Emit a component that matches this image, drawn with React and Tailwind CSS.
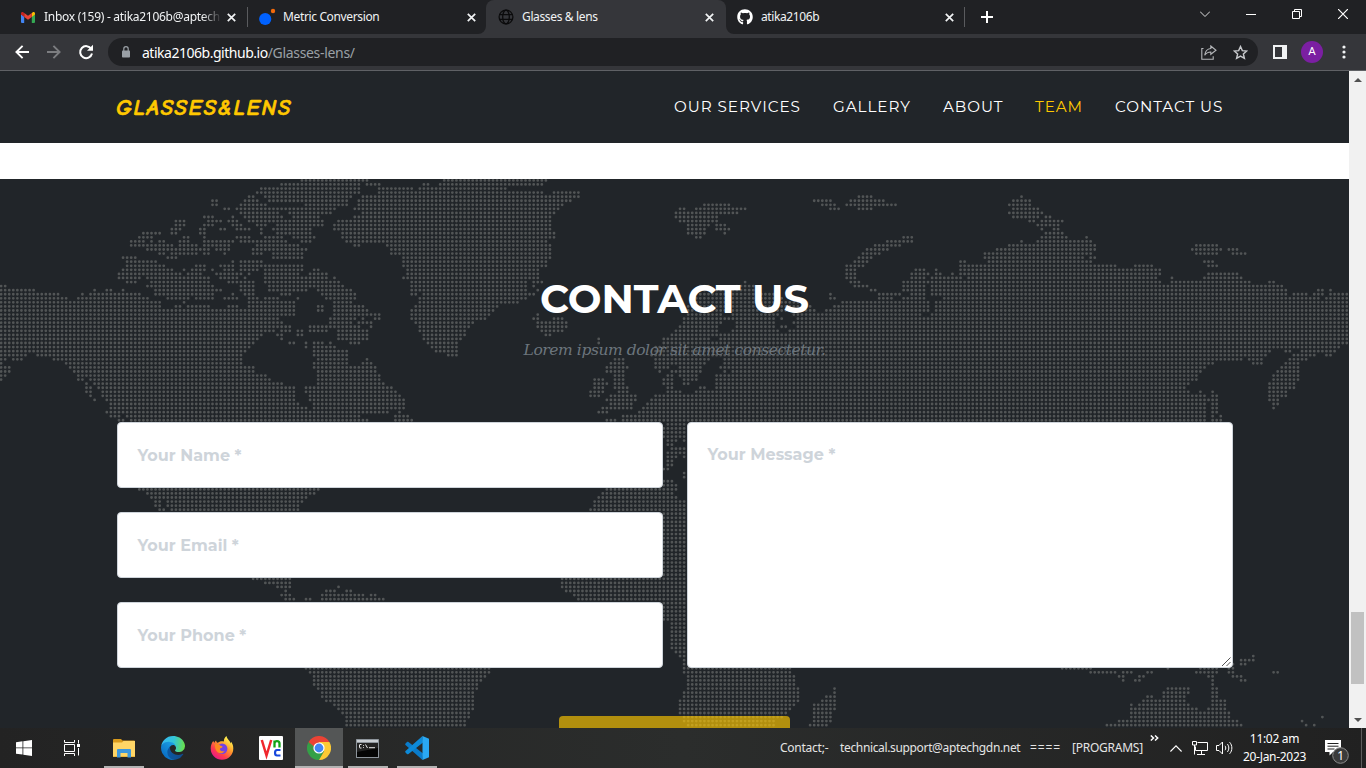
import { FaGithub } from "react-icons/fa";

/* ---------- dotted world map ---------- */

// Each sheet lists rows of land as "y from-to from-to", in thirds of a pixel
// from the sheet origin. An open run ("1210-") reaches the sheet's edge.
const SHEETS = [
  {
    x: 0, y: 170,
    rows: `31 905-1100 1330-|43 845-1078 1100-1140 1270-1285 1318-|55 783-1078 1135-1235 1260-|67 770-1075 1135-|79 745-760 795-1055 1085-|91 636-648 735-770 806-1040 1075-|104 636-648 722-795 915-1045 1075-|116 673-685 710-1010 1065-|128 722-835 865-990 1085-|140 612-636 697 735-845 880-960 1065-|153 527-551 624-660 685-709 745-820 830-965 1015-|165 527-551 612-636 697-720 770-795 830-965 1003-|177 515-540 600-612 660-672 709-745 783 820-930 1003-|189 430-478 515-527 600-612 783 830-930 1027-|201 418-460 551-563 612 709-750 795-850 880-945 1027-|213 393-430 455 478-490 540-563 612-697 722-780 795-860 905-930 1040-|226 393-515 540-590 612-685 770-890 1065-1075 1160-|238 442-500 515-600 612-625 650-685 757-920 1172-|250 478-490 515-590 612-625 673 757-790 820-905 1172-|262 369-405 503-527 820-905 1210-|274 381-465 697 722-785 1210-|286 381-490 588-612 660-697 722-780 795-905 1210-|299 369-515 551 576-612 636 673-697 722-770 795-905 940-955 1222-|311 357-540 564-600 648-720 745 795-865 880-900 930-980 1222-|323 357-420 442-625 660-685 697-709 733 795-980 1003 1210-|335 381-405 455-625 685-709 722-757 795-1018 1235-|347 0-15 442-640 722-760 806-1030 1235-|360 0-100 283 320-332 369 466-660 722-760 806-920 950-1055 1235-|372 0-175 247 271-420 466-640 697 733-760 845-870 965-1060 1235-1247 1270-|384 0-200 235-445 503-565 588-640 673-709 745-770 795-835 890 980-1065 1260-|396 0-480 551 745-785 795-835 845-880 1000-1055 1260-|408 0-480 527-540 564-625 685-709 745-835 845-880 953-965 1000-1090 1247-|421 0-510 520-835 845-880 953-965 1000-1100 1235-|433 0-835 845-880 1000-1060 1075-1110 1125-1137 1235-|445 0-835 990-1070 1085-1095 1125-1137 1235-|457 0-830 845 990-1050 1075-1110 1247-|469 0-830 845-870 930-1080 1110 1260-|481 0-820 845-870 893-905 930-980 1015-1100 1260-|494 0-785 832 845 893-905 1015-1100 1272-|506 0-770 845 1015-1100 1272-|518 0-757 870-880 918 942-965 990 1050-1075 1285-|530 0-745 918 942-1005 1300-|543 0-735 942-1040 1310-|555 0-80 110-725 942-1040 1345-|567 0-15 38-65 160-725 955-1040 1100|579 0-5 197-725 942-1040 1085-1110|591 0-28 210-760 942-1125|604 0-28 220-760 955-1125|616 0-16 235-250 260-795 955-1137|628 0-5 235-245 271-805 955-1137|640 260 285-840 955-1145|652 260-270 297-880 918-1170|665 260-270 310-880 918-1185|677 270 310-880 930-1195|689 283 320-880 935-1210|701 332-890 942-1210|713 332-905 918 942-1210|725 320-905 918-1165 1198|738 332-360 380-1080 1185-1220|750 357-370 393-1100 1185-1235`,
  },
  {
    x: 455, y: 170,
    rows: `31 0-275|43 0-262|55 0-150|67 0-265 295-370|79 0-370 1210-1250|91 0-345 1075-1130 1185-1285|104 0-320 745-820 1100-1140 1175-1325|116 0-310 673-685 722-870 1125-1150 1210-1250|128 0-300 660-850|140 0-290 660-785|153 0-290 673-790|165 0-290 697-760 783-810|177 0-285 697-750 783-820|189 0-295 697-750 808|201 0-295 722-735 1345-|213 0-275 1295-|226 0-285 1260-1340|238 0-285 1235-1300|250 0-285 1222-1275|262 0-285 1210-1250|274 0-275 1198-1235|286 0-275 1175-1220|299 0-250 1175-1205|311 0-250 1175-1205|323 0-250 1175-1200|335 0-215 235-262 870 1185-1210 1345-|347 0-215 240 735-760 845-900 1198-1235 1345-|360 0-215 250 735-910 1250-1260 1345-|372 0-240 735-960 1125 1270-1340|384 0-215 725-980 1125-1137 1270-1310 1345-|396 0-190 710-1040 1160-1260 1270-|408 0-130 700-1065 1137-|421 0-120 700-1080 1115-|433 0-100 245 700-800 830-970 1015-|445 0-50 60-95 235-250 295-320 685-955 985 1025-|457 0-50 250-335 685-800 845-955 1015-|469 0-45 250-335 673-790 845-960 980-995 1025-|481 0-30 262-320 660-780 830-970 1000-|494 0-30 271-285 650-770 790-|506 0-18 430 625-760 800-|518 0-5 430 625-|530 0-5 600-780 790-|543 0-5 600-|555 588-770 790-|567 478-505 600-760 808-|579 466-505 600-750 808-|591 455-515 600-640 673-740 795-|604 455-500 612 648-660 673-735 808-815 830-|616 478-505 636-650 673-730 783-|628 418-445 478-505 625-655 685-725 783-|640 418-455 478-505 625-650 685-700 783-|652 418-445 478-515 636-650 735-750 783-|665 405-445 490-515 636-675 722-|677 405-430 466-540 600-|689 455-540 588-|701 466-525 576-|713 442-530 564-|725 430-455 550-|738 503-|750 455-480 503-|762 636-690|775 625-690|787 625-690|799 625-690|811 636-660 685|823 636-650|835 648-690|848 636-690|860 636-660 685|872 636-650|884 636-650|896 625-640`,
  },
  {
    x: 910, y: 170,
    rows: `79 335|91 310-360|104 298-360|116 310-385|128 298-395|140 310-385 408-420|153 359-371 395-457|165 383-445|177 395 432-445|189 408-457|201 6 395-470 530|213 6 335 383-543|226 298-555 857-920|238 262-555 848-930 955-985|250 225-543 857-920 968-1010|262 225-520 543-555|274 152-165 237-500 515-543 883-910|286 152-620 675-730 895-920|299 18-45 79 152-750|311 0-50 79-90 128 152-750 895-985|323 0-45 67-115 128-155 175-740 785 883-995|335 0-50 67-750 785-1020 1078-1095|347 0-45 67-1120|360 0-45 67-1130 1225-1237 1262|372 0-45 67-1125 1152-1190 1213-1240 1262-|384 0-45 103-1225 1250-|396 0-50 79-105 120-|408 0-55 79-|421 0-55 79-|433 0-30 67-|445 0-|457 0-|469 0-|481 0-|494 0-|506 0-|518 0-|530 0-1290|543 0-1075 1125-1140 1175-1275|555 0-1065 1150-1215 1250-1262|567 0-995 1018-1060 1140-1190|579 0-910 1030-1060 1128-1165|591 0-885 1115-1165|604 0-875 1103-1165|616 0-860 1090-1165|628 0-860 1090-1165|640 0-835 1078-1155|652 0-825 1078-1155|665 0-835 870 908 1078-1130|677 0-885 908-920 1078-1130|689 0-895 908-920 1078-1105|701 0-885 908-920 1090-1105|713 0-885 908-920 1090|725 0-885 908-920|738 0-885 908 932|750 0-885 908-920 932`,
  },
  {
    x: 0, y: 470,
    rows: `58 416-955|70 440-945|82 452-920|94 466-478 503-905|107 466-478 503-895|119 478-490 515-895|327 757-870|339 795-870|351 832-870 1015|363 857 978-1005 1040-1050|375 845-870 966-1005 1015-1090 1112-1125|387 857-880 918-930 966-1150|595 918-|607 930-|619 940-|631 940-|643 940-|656 955-|668 966-|680 966-|692 978-|704 1003-|716 1015-|729 1030-|741 1040-|753 1040-|765 1040-`,
  },
  {
    x: 455, y: 470,
    rows: `9 687|21 687|33 625-650|45 625-660|58 450-650 663|70 440-650|82 430-665|94 418-690|107 418-690|119 405-690|131 625-690|143 625-690|156 625-690|168 625-690|180 625-690|192 625-690|204 625-690|217 625-690|229 625-690|241 625-690|253 625-690|265 625-690|278 625-690|290 625-690|302 625-690|314 625-690|327 320-690|339 320-690|351 320-690|363 332-690|375 357-690|387 369-690|399 625-690|411 625-690|424 625-690|436 625-690|448 625-690|460 650-690|472 650-690|485 650-690|497 650-690|509 650-690|521 650-690|533 650-690|545 660-690|557 673-690|570 687|582 687|595 0-105 687-1005|607 0-105 687-1005|619 0-90 697-1018|631 0-75 697-1018|643 0-65 697-1018|656 0-65 697-1030 1137|668 0-55 685-1030 1137|680 0-55 685-1030 1112-1137|692 0-55 673-1030 1103-1137|704 0-55 673-1018 1078-1137|716 0-55 673-1005 1078-1137|729 0-40 673-990 1078-1125|741 0-40 685-980 1078-1125|753 0-30 685-960 1078-1125|765 0-30 697-960 1066-1115`,
  },
  {
    x: 910, y: 470,
    rows: `558 1030|570 993-1030|582 968 993-1005|595 457-545 773 870-920 955-965|607 543-615 640-665 712-725 860-920 955-965 1090-1103|619 628-640 687-700 895-908 968-995|631 640 675-687 908 993-1005|643 908|656 773-835 908-920|668 760-835 908-920|680 712-725 760-825 908-920|692 700-825 908-945|704 663 687-835 908-945|716 663-860 895-945|729 663-957|741 663-957 1238|753 628-980 1176|765 590-993 1188 1213`,
  },
];

const PITCH = 4.0655;
const MAP_X = 1.1;
const MAP_Y = 1.4;
const TOP = 179;

function mapPath() {
  const dots = new Set();
  for (const sheet of SHEETS) {
    for (const line of sheet.rows.split("|")) {
      const [y, ...runs] = line.split(" ");
      const row = Math.round((sheet.y + Number(y) / 3 - TOP - MAP_Y) / PITCH);
      for (const run of runs) {
        const [a, b] = run.split("-");
        const end = b === undefined ? a : b === "" ? 1365 : b;
        const from = Math.ceil((sheet.x + (Number(a) - 5.5) / 3 - MAP_X) / PITCH);
        const to = Math.floor((sheet.x + (Number(end) + 5.5) / 3 - MAP_X) / PITCH);
        for (let c = from; c <= to; c++) dots.add(c + "," + row);
      }
    }
  }
  let d = "";
  for (const key of dots) {
    const [c, r] = key.split(",").map(Number);
    d += `M${(MAP_X + c * PITCH).toFixed(2)} ${(MAP_Y + r * PITCH).toFixed(2)}h0`;
  }
  return d;
}
const MAP = mapPath();

function WorldMap() {
  return (
    <svg className="absolute left-0 top-0" width="1349" height="549" viewBox="0 0 1349 549" fill="none">
      <path d={MAP} stroke="#525556" strokeWidth="2.8" strokeLinecap="round" />
    </svg>
  );
}

/* ---------- browser chrome ---------- */

function Cross({ className = "" }) {
  return (
    <svg className={className} width="9" height="9" viewBox="0 0 9 9" stroke="#f1f3f4" strokeWidth="1.7">
      <path d="M.8.8l7.4 7.4M8.2.8L.8 8.2" />
    </svg>
  );
}

function Gmail() {
  return (
    <svg width="14" height="11" viewBox="0 0 14 11">
      <path d="M0 2v8a1 1 0 0 0 1 1h2.2V4.5z" fill="#4285f4" />
      <path d="M14 2v8a1 1 0 0 1-1 1h-2.200V4.500z" fill="#34a853" />
      <path d="M10.800.900v4L14 2.400V1.500C14 .2 12.600-.4 11.500.4z" fill="#fbbc04" />
      <path d="M3.200 5V.900L7 3.700 10.800.900V5L7 7.800z" fill="#ea4335" />
      <path d="M0 1.500v.9L3.200 5V.900L2.500.4C1.400-.4 0 .2 0 1.500z" fill="#c5221f" />
    </svg>
  );
}

function TabStrip() {
  return (
    <div className="flex h-[34px] w-full items-stretch bg-[#202124] font-['Noto_Sans',sans-serif] text-[12px] text-[#f1f3f4]">
      <div className="flex w-[247px] items-center pl-[21px]">
        <Gmail />
        <span className="ml-[9px] w-[176px] overflow-hidden whitespace-nowrap tracking-[-0.28px] [mask-image:linear-gradient(to_right,black_158px,transparent_178px)]">
          Inbox (159) - atika2106b@aptech
        </span>
        <Cross className="ml-[7px]" />
      </div>
      <div className="flex w-[239px] items-center">
        <div className="h-[20px] w-px bg-[#5a5b5e]" />
        <svg className="ml-[11px]" width="17" height="18" viewBox="0 0 17 18">
          <circle cx="6.200" cy="11" r="6.100" fill="#0061fe" />
          <circle cx="14" cy="3" r="2.200" fill="#f46a0b" />
        </svg>
        <span className="ml-[7px] w-[180px] whitespace-nowrap tracking-[-0.36px]">Metric Conversion</span>
        <Cross className="ml-[4px]" />
      </div>
      <div className="relative flex w-[240px] items-center rounded-t-[8px] bg-[#35363a] pl-[12px]">
        <svg className="absolute -left-[8px] bottom-0" width="8" height="8">
          <path d="M8 0v8H0a8 8 0 0 0 8-8z" fill="#35363a" />
        </svg>
        <svg className="absolute -right-[8px] bottom-0" width="8" height="8">
          <path d="M0 0v8h8a8 8 0 0 1-8-8z" fill="#35363a" />
        </svg>
        <svg width="16" height="16" viewBox="0 0 16 16" fill="none" stroke="#0b0b0c" strokeWidth="1.300">
          <circle cx="8" cy="8" r="6.900" />
          <ellipse cx="8" cy="8" rx="3.300" ry="6.900" />
          <path d="M1.600 5.600h12.800M1.600 10.400h12.800" />
        </svg>
        <span className="ml-[8px] w-[180px] whitespace-nowrap tracking-[-0.36px]">Glasses &amp; lens</span>
        <Cross className="ml-[3px]" />
      </div>
      <div className="flex w-[239px] items-center pl-[11px]">
        <FaGithub size={16} color="#fff" />
        <span className="ml-[8px] w-[180px] whitespace-nowrap tracking-[-0.4px]">atika2106b</span>
        <Cross className="ml-[4px]" />
        <div className="ml-[10px] h-[20px] w-px bg-[#5a5b5e]" />
      </div>
      <div className="flex flex-1 items-center pl-[16px]">
        <svg width="12" height="12" viewBox="0 0 12 12" stroke="#fff" strokeWidth="2">
          <path d="M6 0v12M0 6h12" />
        </svg>
      </div>
      <div className="flex items-start gap-[36px] pr-[18px] pt-[9px]">
        <svg width="10" height="10" viewBox="0 0 10 10" fill="none" stroke="#dcdddd" strokeWidth="1">
          <path d="M0 2.500l5 5 5-5" />
        </svg>
        <svg width="10" height="10" viewBox="0 0 10 10" fill="#fff">
          <rect y="5" width="10" height="1" />
        </svg>
        <svg width="10" height="10" viewBox="0 0 10 10" fill="none" stroke="#fff">
          <path d="M.5 2.500h7v7h-7zM2.500 2.500v-2h7v7h-2" />
        </svg>
        <svg width="10" height="10" viewBox="0 0 10 10" stroke="#fff" strokeWidth="1.200">
          <path d="M0 0l10 10M10 0L0 10" />
        </svg>
      </div>
    </div>
  );
}

function Toolbar() {
  return (
    <div className="flex h-[37px] w-full items-center border-b border-[#5f6165] bg-[#35363a] pl-[15px] font-['Noto_Sans',sans-serif]">
      <svg width="14" height="14" viewBox="0 0 14 14" fill="none" stroke="#fff" strokeWidth="1.900">
        <path d="M14 7H1.500M7.600.8L1.400 7l6.200 6.200" />
      </svg>
      <svg className="ml-[18px]" width="14" height="14" viewBox="0 0 14 14" fill="none" stroke="#7c7d80" strokeWidth="1.900">
        <path d="M0 7h12.500M6.400.8L12.600 7l-6.200 6.200" />
      </svg>
      <svg className="ml-[17px]" width="16" height="16" viewBox="0 0 16 16">
        <path d="M13.300 5A6 6 0 1 0 14 9.500" fill="none" stroke="#fff" strokeWidth="2" />
        <path d="M15 .8v6H9z" fill="#fff" />
      </svg>
      <div className="ml-[14px] flex h-[28px] w-[1150px] items-center rounded-full bg-[#202124] pl-[14px]">
        <svg width="8" height="12" viewBox="0 0 8 12">
          <rect y="4.500" width="8" height="7" rx=".8" fill="#9aa0a6" />
          <path d="M1.800 5V2.900a2.200 2.200 0 0 1 4.400 0V5" fill="none" stroke="#9aa0a6" strokeWidth="1.200" />
        </svg>
        <span className="ml-[12px] whitespace-nowrap text-[14px] tracking-[-0.48px] text-white">
          atika2106b.github.io<span className="tracking-[-0.32px] text-[#9aa0a6]">/Glasses-lens/</span>
        </span>
        <svg className="ml-auto" width="16" height="15" viewBox="0 0 16 15" fill="none" stroke="#b4b6b9" strokeWidth="1.100">
          <path d="M2.500 3.500H.8v10.700h11.400v-3" />
          <path d="M9.800 1l5.200 4.300-5.200 4V7C7 7 5.200 7.800 3.700 10.300 4.100 6.500 6 3.900 9.800 3.500z" />
        </svg>
        <svg className="ml-[16px] mr-[10px]" width="15" height="15" viewBox="0 0 24 24" fill="none" stroke="#c7c9cc" strokeWidth="2.300">
          <path d="M12 2.500l2.900 6.500 7 .7-5.300 4.700 1.600 7L12 17.700l-6.200 3.700 1.600-7L2.100 9.700l7-.7z" />
        </svg>
      </div>
      <svg className="ml-[15px]" width="14" height="14" viewBox="0 0 14 14">
        <path d="M0 0h14v14H0zM2 2v10h7V2z" fill="#f1f3f4" fillRule="evenodd" />
      </svg>
      <div className="ml-[14px] flex h-[22px] w-[22px] items-center justify-center rounded-full bg-[#7b1fa2] font-[Roboto,sans-serif] text-[11.5px] text-white">
        A
      </div>
      <svg className="ml-[19px]" width="4" height="14" viewBox="0 0 4 14" fill="#f1f3f4">
        <circle cx="2" cy="2" r="1.600" />
        <circle cx="2" cy="7" r="1.600" />
        <circle cx="2" cy="12" r="1.600" />
      </svg>
    </div>
  );
}

/* ---------- page ---------- */

function Header() {
  return (
    <header className="flex h-[72px] items-center bg-[#212529] pl-[116px] font-[Montserrat,Inter,sans-serif]">
      <span className="w-[558px] whitespace-nowrap pt-[3px] font-['Comic_Neue',Lato,sans-serif] text-[22.5px] font-black italic tracking-[1.700px] text-[#ffc800] [-webkit-text-stroke:0.6px_#ffc800]">
        GLASSES&amp;LENS
      </span>
      <nav className="flex whitespace-nowrap pt-px text-[15.2px] tracking-[0.95px] text-white">
        <a className="w-[159px]">OUR SERVICES</a>
        <a className="w-[110px]">GALLERY</a>
        <a className="w-[92px]">ABOUT</a>
        <a className="w-[80px] text-[#ffc800]">TEAM</a>
        <a>CONTACT US</a>
      </nav>
    </header>
  );
}

function Field({ children }) {
  return (
    <div className="flex h-[66px] items-center rounded-[4px] border border-[#ced4da] bg-white pl-[20px] pt-px">{children}</div>
  );
}

function Contact() {
  return (
    <section className="relative h-[549px] overflow-hidden bg-[#212529]">
      <WorldMap />
      <div className="relative flex flex-col items-center pt-[96px]">
        <h2 className="whitespace-nowrap font-[Montserrat,Inter,sans-serif] text-[40px] font-bold leading-[48px] text-white">
          CONTACT US
        </h2>
        <p className="mt-[15px] whitespace-nowrap font-['Roboto_Slab','DejaVu_Serif',serif] text-[15.5px] italic leading-[24px] tracking-[-0.43px] text-[#6c757d]">
          Lorem ipsum dolor sit amet consectetur.
        </p>
        <div className="mt-[60px] grid w-[1116px] grid-cols-2 gap-x-[24px] font-[Montserrat,Inter,sans-serif] text-[16px] font-bold text-[#ced4da]">
          <div className="flex flex-col gap-[24px]">
            <Field>Your Name *</Field>
            <Field>Your Email *</Field>
            <Field>Your Phone *</Field>
          </div>
          <div className="relative rounded-[4px] border border-[#ced4da] bg-white pl-[20px] pt-[20px]">
            Your Message *
            <svg className="absolute bottom-px right-px" width="9" height="9" viewBox="0 0 9 9" stroke="#555" strokeWidth="1">
              <path d="M0 9l8.500-8.500M4.500 9l4-4" />
            </svg>
          </div>
        </div>
        <button className="mt-[48px] h-[60px] w-[231px] rounded-[4px] bg-[#ffc800]/65" aria-label="Send" />
      </div>
    </section>
  );
}

function Scrollbar() {
  return (
    <div className="flex w-[17px] flex-col items-center bg-[#f1f1f1] pb-[6px] pt-[7px]">
      <svg width="8" height="4" viewBox="0 0 8 4" fill="#505050">
        <path d="M0 4l4-4 4 4z" />
      </svg>
      <div className="mt-[530px] h-[72px] w-[13px] bg-[#c1c1c1]" />
      <svg className="mt-auto" width="8" height="4" viewBox="0 0 8 4" fill="#505050">
        <path d="M0 0l4 4 4-4z" />
      </svg>
    </div>
  );
}

/* ---------- taskbar ---------- */

function Explorer() {
  return (
    <svg width="22" height="19" viewBox="0 0 22 19">
      <path d="M0 1a1 1 0 0 1 1-1h7l1.500 1.500H21a1 1 0 0 1 1 1V18H0z" fill="#d99a1c" />
      <path d="M0 3.500h9L10.500 2H22v15.500H0z" fill="#ffd566" />
      <path d="M4 18.500V11a1 1 0 0 1 1-1h12a1 1 0 0 1 1 1v7.500h-3.500V14h-7v4.500z" fill="#3d97dc" />
    </svg>
  );
}

function Edge() {
  return (
    <svg width="24" height="24" viewBox="0 0 256 256">
      <defs>
        <linearGradient id="ea" x1="60" y1="180" x2="240" y2="180" gradientUnits="userSpaceOnUse">
          <stop stopColor="#0c59a4" />
          <stop offset="1" stopColor="#114a8b" />
        </linearGradient>
        <linearGradient id="eb" x1="150" y1="100" x2="40" y2="220" gradientUnits="userSpaceOnUse">
          <stop stopColor="#1b9de2" />
          <stop offset="1" stopColor="#0a6fc6" />
        </linearGradient>
        <linearGradient id="ec" x1="20" y1="60" x2="250" y2="90" gradientUnits="userSpaceOnUse">
          <stop stopColor="#35b9ef" />
          <stop offset=".5" stopColor="#33c5d8" />
          <stop offset="1" stopColor="#68e04e" />
        </linearGradient>
      </defs>
      <path fill="url(#ea)" d="M231 190.500c-3.400 1.800-6.900 3.300-10.500 4.600a101.900 101.900 0 0 1-35.900 6.500c-47.300 0-88.500-32.500-88.500-74.300 0-11.500 6.500-22 16.600-27.400-42.800 1.800-53.800 46.400-53.800 72.500 0 73.900 68 81.400 82.800 81.400 7.900 0 19.800-2.300 27-4.600l1.300-.4a128.300 128.300 0 0 0 66.600-52.800 4 4 0 0 0-5.600-5.500z" />
      <path fill="url(#eb)" d="M105.700 241.400a79.200 79.200 0 0 1-22.700-21.300 80.700 80.700 0 0 1 29.700-120.300c3.100-1.500 8.500-4.200 15.600-4.100 10.200.1 19.700 5 25.700 13.100a31.900 31.900 0 0 1 6.300 18.700c0-.2 24.500-79.600-80-79.600C36.500 47.900.3 89.600.3 126.100c-.2 19.300 4 38.500 12.100 56a127.900 127.900 0 0 0 156.500 67.100 75.500 75.500 0 0 1-63.100-7.800z" />
      <path fill="url(#ec)" d="M152.300 148.900c-.8 1-3.300 2.500-3.300 5.700 0 2.600 1.700 5.200 4.800 7.300 14.400 10 41.500 8.700 41.600 8.700 10.700 0 21.100-2.900 30.300-8.300A61.400 61.400 0 0 0 256 109.400c.3-22.400-8-37.300-11.300-43.900C223.500 23.900 177.700 0 128 0A128 128 0 0 0 .3 126.100C.7 89.600 37 60.200 80.300 60.200c3.500 0 23.500.3 42 10 16.300 8.600 24.900 18.900 30.800 29.200 6.200 10.600 7.300 24.100 7.300 29.500 0 5.300-2.700 13.300-8.100 20z" />
    </svg>
  );
}

function Firefox() {
  return (
    <svg width="24" height="24" viewBox="0 0 24 24">
      <defs>
        <linearGradient id="fa" x1="19" y1="3" x2="4" y2="22" gradientUnits="userSpaceOnUse">
          <stop stopColor="#fff34f" />
          <stop offset=".35" stopColor="#ff9a2b" />
          <stop offset=".7" stopColor="#ff3b4e" />
          <stop offset="1" stopColor="#e6168a" />
        </linearGradient>
      </defs>
      <path d="M16.500 0c-1.500 1.200-2.800 3-2.600 5.400C11 4.800 9 5.700 7.800 6.700 6.800 6.500 6.200 5.500 6.100 4.400c-1 .6-1.500 1.600-1.700 2.500L3.300 5C1.600 7 .7 9.500.7 12.500a11.300 11.300 0 0 0 22.600 0c0-2.600-.8-5-2.200-6.700l-.5 1.700C20.200 4.500 17 3.400 16.500 0z" fill="url(#fa)" />
      <circle cx="12.200" cy="12.800" r="5.200" fill="#7543e3" />
      <path d="M5 8.500c2.500-1 4 .1 5.600 1.200 1.200.1 2 .5 1.900 1.200-.2.900-2.200.9-2.700 2 .4 2 2.600 3 5 1.800-1.300 2.600-4.800 3.500-7.200 1.600C5.800 14.700 4.600 11.500 5 8.500z" fill="#ff8a1f" />
    </svg>
  );
}

function Vnc() {
  return (
    <svg width="24" height="24" viewBox="0 0 24 24" fill="none">
      <rect width="24" height="24" rx="1" fill="#fff" />
      <path d="M2.800 4l4.700 15.500L12.200 4" stroke="#f0272d" strokeWidth="2.500" />
      <path d="M15.500 11.500v-7M15.500 7.500c0-3.300 5-3.300 5 0v4" stroke="#12a316" strokeWidth="2.300" />
      <path d="M21.500 14h-3.500c-2.600 0-2.600 5.500 0 5.500h3.500" stroke="#1747dc" strokeWidth="2.200" />
    </svg>
  );
}

function Chrome() {
  return (
    <svg width="24" height="24" viewBox="0 0 24 24">
      <path d="M12 12L1.600 6A12 12 0 0 1 22.400 6z" fill="#ea4335" />
      <path d="M1.600 6A12 12 0 0 0 12 24l5.200-9L12 12 6.800 15z" fill="#34a047" />
      <path d="M22.400 6H12v6l5.200 3L12 24A12 12 0 0 0 22.400 6z" fill="#fcc934" />
      <path d="M1.600 6h10.400v6l-5.200 3z" fill="#ea4335" />
      <path d="M1.600 6l5.200 9 3-2z" fill="#34a047" />
      <circle cx="12" cy="12" r="5.600" fill="#fff" />
      <circle cx="12" cy="12" r="4.400" fill="#4285f4" />
    </svg>
  );
}

function Cmd() {
  return (
    <svg width="23" height="19" viewBox="0 0 23 19">
      <rect width="23" height="19" rx=".5" fill="#8d949b" />
      <rect x="1" y="1" width="21" height="2" fill="#c8cdd2" />
      <rect x="1" y="4" width="21" height="14" fill="#050505" />
      <path d="M1 4h21v5L1 13z" fill="#222" />
      <path d="M5.500 5.500H4a.5.500 0 0 0-.5.500v2.500a.5.500 0 0 0 .5.500h1.500M7.500 6v.8M7.500 8v.8M9.500 5.500l2 3.500M13 8.700h6" stroke="#e8e8e8" fill="none" strokeWidth="1" />
    </svg>
  );
}

function VsCode() {
  return (
    <svg width="24" height="24" viewBox="0 0 24 24">
      <path d="M17.500 24L.5 8.900c-.5-.5-.5-1 0-1.500L2 6c.5-.4 1-.4 1.500 0L18 17.500z" fill="#0a7ccb" />
      <path d="M17.500 0L.5 15.100c-.5.500-.5 1 0 1.500L2 18c.5.400 1 .4 1.500 0L18 6.500z" fill="#0d8ad8" />
      <path d="M17.500 0L24 2.800v18.400L17.500 24z" fill="#2aa8f2" />
    </svg>
  );
}

function TaskbarApp({ children, on = false, active = false }) {
  return (
    <div className={(active ? "w-[48px] bg-[#545656] " : "w-[49px] ") + "flex h-full flex-col items-center"}>
      <div className="flex h-[38px] items-center pt-[2px]">{children}</div>
      {on && <div className={(active ? "w-full" : "w-[40px]") + " h-[2px] bg-[#b3b3b3]"} />}
    </div>
  );
}

function Taskbar() {
  return (
    <div className="flex h-[40px] w-full items-center bg-linear-to-r from-[#232323] via-[#2b2d2c] to-[#212121] font-['Noto_Sans',sans-serif] text-[12px] text-white">
      <div className="flex w-[48px] justify-center">
        <svg width="16" height="16" viewBox="0 0 16 16" fill="#fff">
          <path d="M0 2.200l6.500-.9v6.200H0zM7.300 1.200L16 0v7.500H7.300zM0 8.300h6.500v6.300L0 13.700zM7.300 8.300H16V16l-8.700-1.200z" />
        </svg>
      </div>
      <div className="flex w-[51px] justify-center pr-[3px]">
        <svg width="16" height="16" viewBox="0 0 16 16" fill="none" stroke="#fff" strokeWidth="1">
          <path d="M.5 4.500h10v7H.5zM.5 0v2.500h10V0M.5 16v-2.500h10V16M14.500 0v3.500M14.500 8v7.500" />
          <path d="M13 4h3v3h-3z" fill="#fff" stroke="none" />
        </svg>
      </div>
      <TaskbarApp on><Explorer /></TaskbarApp>
      <TaskbarApp><Edge /></TaskbarApp>
      <TaskbarApp><Firefox /></TaskbarApp>
      <TaskbarApp><Vnc /></TaskbarApp>
      <TaskbarApp on active><Chrome /></TaskbarApp>
      <TaskbarApp on><Cmd /></TaskbarApp>
      <TaskbarApp on><VsCode /></TaskbarApp>
      <div className="ml-[339px] flex w-[370px] whitespace-pre text-[#e4e4e4]">
        <span className="w-[60px] tracking-[-0.25px]">Contact;-</span>
        <span className="w-[190px] tracking-[-0.35px]">technical.support@aptechgdn.net</span>
        <span className="w-[42px] tracking-[0.9px]">====</span>
        <span className="tracking-[-0.25px]">[PROGRAMS]</span>
      </div>
      <svg className="mb-[20px]" width="9" height="6" viewBox="0 0 9 6" fill="none" stroke="#fff" strokeWidth="1.500">
        <path d="M.8.5L3.500 3 .8 5.500M5 .5L7.700 3 5 5.500" />
      </svg>
      <svg className="ml-[11px]" width="12" height="7" viewBox="0 0 12 7" fill="none" stroke="#fff" strokeWidth="1.200">
        <path d="M.4 6.500L6 .9l5.600 5.600" />
      </svg>
      <svg className="ml-[10px]" width="16" height="14" viewBox="0 0 16 14" fill="none" stroke="#fff">
        <path d="M5.500 1.500h10v8H3.500V5.500M5 13.500h8M9.500 9.500v4M.5.500h4v3.500h-4zM2.500 4v9.500" />
      </svg>
      <svg className="ml-[8px]" width="17" height="14" viewBox="0 0 17 14" fill="none" stroke="#fff">
        <path d="M.5 4.500h2.500L6.500 1v12L3 9.500H.5zM9 4.800c1 1.200 1 3.200 0 4.400M11.300 3c2 2.200 2 5.800 0 8M13.600 1.200c3 3.200 3 8.400 0 11.600" />
      </svg>
      <div className="ml-[9px] flex w-[65px] flex-col items-center whitespace-nowrap leading-[18px] tracking-[-0.3px]">
        <span>11:02 am</span>
        <span>20-Jan-2023</span>
      </div>
      <svg className="ml-[18px] mt-[7px]" width="25" height="26" viewBox="0 0 25 26">
        <path d="M0 1h16v12H8l-3.500 3.500V13H0z" fill="#fff" />
        <path d="M2.500 4.500h11M2.500 7.200h11M2.500 10h7" stroke="#222" />
        <circle cx="15.500" cy="16.500" r="7.800" fill="#3b3b3b" stroke="#8c8c8c" />
        <text x="12.300" y="21" fill="#fff" fontSize="12" fontFamily="Noto Sans">1</text>
      </svg>
      <div className="ml-auto mr-[4px] h-full w-px bg-[#5c5c5c]" />
    </div>
  );
}

export default function App() {
  return (
    <div className="flex h-[768px] w-[1366px] flex-col overflow-hidden bg-white">
      <TabStrip />
      <Toolbar />
      <div className="flex h-[657px]">
        <main className="w-[1349px]">
          <Header />
          <div className="h-[36px] bg-white" />
          <Contact />
        </main>
        <Scrollbar />
      </div>
      <Taskbar />
    </div>
  );
}
